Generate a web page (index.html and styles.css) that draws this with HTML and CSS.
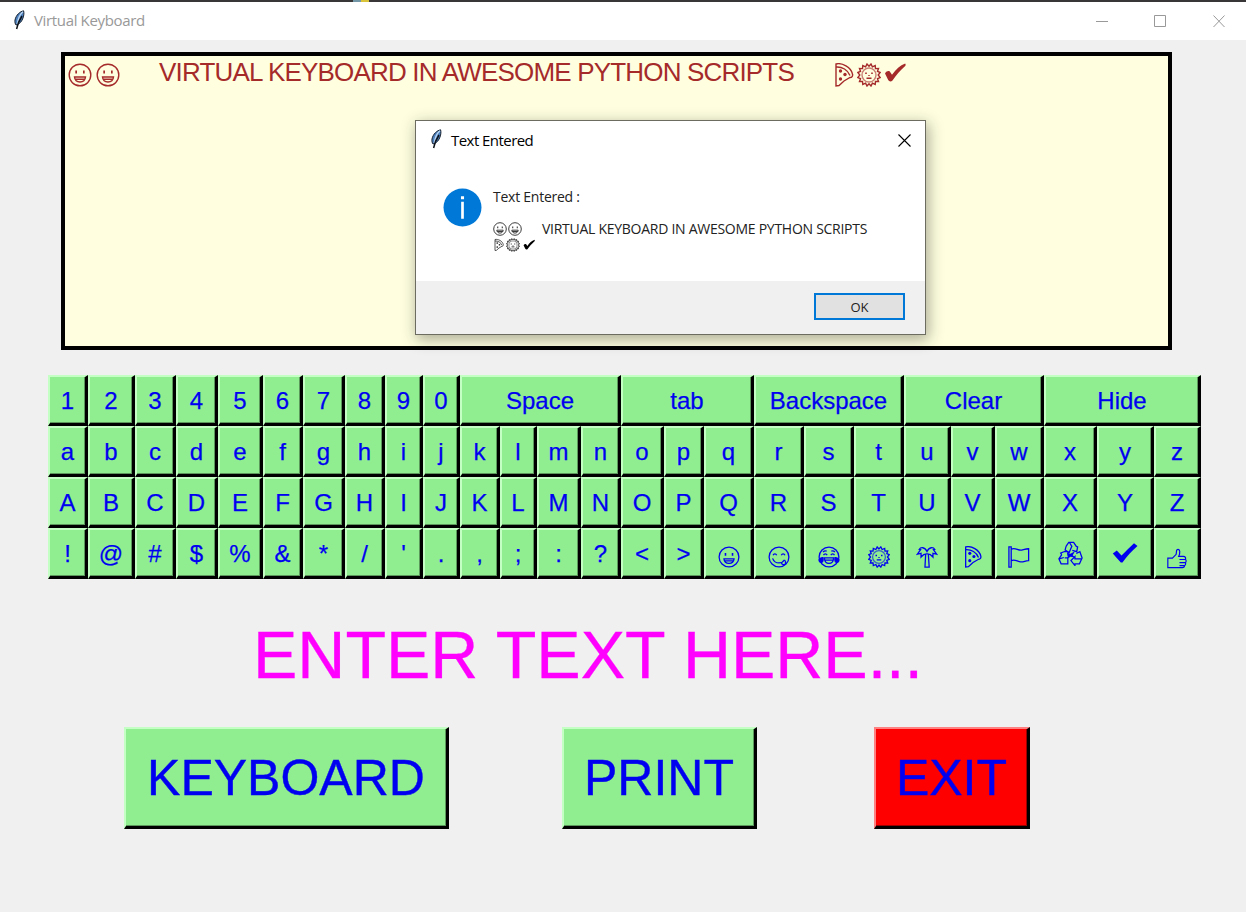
FILE: index.html
```html
<!DOCTYPE html>
<html lang="en">
<head>
<meta charset="utf-8">
<title>Virtual Keyboard</title>
<link rel="stylesheet" href="styles.css">
</head>
<body>
<svg class="sprite" aria-hidden="true">
  <symbol id="feather" viewBox="0 0 12 20">
    <path d="M10.600.8C7 1.500 3 5 2 10c-.4 2 .2 4 1 5l1.500-.5C7 13.500 9 11 10 8c.9-2.600 1.200-5 .6-7.200z" fill="#4b7fbd" stroke="#17212e" stroke-width="1"/>
    <path d="M9.800 1.800C6.500 5 5 9 4.200 14" fill="none" stroke="#b8d4f0" stroke-width="1.300"/>
    <path d="M9 6C7 9 5 12 3.600 19" fill="none" stroke="#0c1118" stroke-width="1.500"/>
  </symbol>
  <symbol id="grin" viewBox="0 0 24 24">
    <circle cx="12" cy="12" r="10.800"/><path d="M6.500 14h11c-.3 3-2.500 5-5.500 5s-5.200-2-5.500-5zM7.300 16.300h9.400"/>
    <path class="solid" d="M7.300 7.500h1.700v3H7.300zM15 7.500h1.700v3H15z"/>
  </symbol>
  <symbol id="yum" viewBox="0 0 24 24">
    <circle cx="12" cy="12" r="10.800"/><path d="M5.500 10c.8-1.800 3.200-1.800 4 0M14.500 10c.8-1.800 3.200-1.800 4 0M5 13.500c1.500 4 4 5 7 5 2.500 0 4.500-1 6-3.500M14.500 18.200c.5 2.500 3.500 3 4.500.8.500-1.200 0-2.500-.8-3.500"/>
  </symbol>
  <symbol id="joy" viewBox="0 0 24 24">
    <circle cx="12" cy="12" r="10.800"/><path d="M5.500 6.500C7 5 8 5 9.500 5.500M14.500 5.500C16 5 17 5 18.500 6.500M6 10c1-1.800 3-1.800 4 0M14 10c1-1.800 3-1.800 4 0M7 13h10c-.2 3.500-2 6-5 6s-4.800-2.500-5-6zM7.500 15.500h9"/>
    <path class="solid" d="M.5 14.500C1.500 12.500 4 12 6 12c.8 3 .3 6-1.800 6.500C2 19 0 17 .5 14.500zM23.500 14.500C22.500 12.500 20 12 18 12c-.8 3-.3 6 1.800 6.500 2.200.5 4.200-1.500 3.700-4z"/>
  </symbol>
  <symbol id="sun" viewBox="0 0 24 24">
    <path d="M12 3.200 14 1l1.400 2.800L18.200 2.600l.3 3 3-.1-1 2.800 2.700 1.200-2 2.500 2 2.500-2.700 1.200 1 2.800-3-.1-.3 3-2.800-1.200L14 23l-2-2.200L10 23l-1.400-2.800-2.800 1.200-.3-3-3 .1 1-2.800-2.700-1.200 2-2.500-2-2.500 2.700-1.200-1-2.800 3 .1.300-3 2.800 1.200L10 1z"/>
    <circle cx="12" cy="12" r="7" stroke-opacity=".6"/><path d="M9.500 15.200h5M12 12v1"/>
    <path class="solid" d="M8.200 9.500h1.600v1.600H8.200zM14.200 9.500h1.600v1.600h-1.600z"/>
  </symbol>
  <symbol id="palm" viewBox="0 0 24 24">
    <path d="M10.500 9.500 9.800 23h4.600l-.9-13.500M12 6C9.500.8 5 1 3.500 3.800L5 4 1.500 9c1.500-.4 2.500-.8 4-1L5.500 12c2-2.500 4-3.700 6.500-3.500 2.500-.2 4.500 1 6.500 3.500l0-4c1.500.2 2.500.6 4 1L19 4l1.500-.2C19 1 14.500.8 12 6z"/>
  </symbol>
  <symbol id="pizza" viewBox="0 0 24 24">
    <path d="M4 1C10-.5 19 4 20.500 11c.5 2-.7 3.600-2.500 3.500L12 18 7 22.500 4 23zM4 4C10 3.500 16 7 18 12.500"/>
    <circle class="solid" cx="8.500" cy="8" r="1.700"/><circle class="solid" cx="13" cy="11.500" r="1.700"/><circle class="solid" cx="8.500" cy="16" r="1.700"/>
  </symbol>
  <symbol id="flag" viewBox="0 0 24 24">
    <path d="M1 1h2.500v22H1zM3.500 3.500C8 1 11 5.500 15 4.500c3-.8 4.500-1.500 7.500-1.500v13c-3.500-.2-5 1.500-8.500 1.300-4-.3-6.500-3.300-10.500-1.300"/>
  </symbol>
  <symbol id="recycle" viewBox="0 0 28 28">
    <path d="M9 6 12 1.500h5.500L20.500 6l1.500.5-1 5.500-5-1.500M9 6l-1 4 4.500 3L15.500 6 13 2M6.500 12 3 13.500l1 2L1 20l2.500 5.500H11v-6.500H7.500M6.500 12l4.500 0 .5 5M1.500 20l5-1.500M20.500 14l4-2L27 19l-3 6.500h-5v2L14.500 22l4.500-4.500V20h7.500"/>
    <path class="solid" d="m10 13.500 4 .8 5-2.800-2.500 4.500 3 2.500-5.500-1-3.500 2.500.5-3.500z"/>
  </symbol>
  <symbol id="check" viewBox="0 0 26 20">
    <path class="solid" d="M.8 10.500 4.800 7.500l4.700 5C13.500 8.500 18 4 22 .2L25.500 3C19.500 8 14.500 14 10.500 19.500H8.800C6 16.500 3.500 13.500.8 10.500z"/>
  </symbol>
  <symbol id="inkcheck" viewBox="0 0 22 20">
    <path class="solid" d="M1 10.500C2.500 8 4.500 7.500 5.800 8.500l2.200 3.300C12 6.500 16 2.500 21.200.6c.6.800.6 1.800 0 2.400C16 7.500 12 12.500 8.500 17.500 7 19 5 18.500 4.200 17z"/>
  </symbol>
  <symbol id="thumb" viewBox="0 0 24 24">
    <path d="M1 11.500h5.500L11 7l.5-4.500c.2-2 3.500-2 3.800.8.200 2.200-.3 4.200-1.300 6.200h5.500c2.500 0 3.500 2 2.500 3.500 1.300 1 1.300 3 0 4 .8 1.300.2 3-1 3.500 0 1.500-1 2.500-2.500 2.500H1zM15 13.200h7M15 17h7M15 20.500h6"/>
  </symbol>
</svg>

<div class="strip"><i></i><b></b></div>

<header class="titlebar">
  <svg class="feather"><use href="#feather"/></svg>
  <span class="titlebar-text">Virtual Keyboard</span>
  <svg class="window-buttons" viewBox="0 0 130 13">
    <path d="M0 6.500h12M58.500.5h11v11h-11zM117.500.5l11 11.500M128.500.5l-11 11.500"/>
  </svg>
</header>

<main>
  <section class="entry">
    <svg class="ink"><use href="#grin"/></svg>
    <svg class="ink second"><use href="#grin"/></svg>
    <span class="entry-text">VIRTUAL KEYBOARD IN AWESOME PYTHON SCRIPTS</span>
    <svg class="ink"><use href="#pizza"/></svg>
    <svg class="ink"><use href="#sun"/></svg>
    <svg class="ink tick"><use href="#inkcheck"/></svg>
  </section>

  <section class="keys">
    <button>1</button><button>2</button><button>3</button><button>4</button><button>5</button><button>6</button><button>7</button><button>8</button><button>9</button><button>0</button>
    <button class="span4">Space</button><button class="span3">tab</button><button class="span3">Backspace</button><button class="span3">Clear</button><button class="span3">Hide</button>

    <button>a</button><button>b</button><button>c</button><button>d</button><button>e</button><button>f</button><button>g</button><button>h</button><button>i</button><button>j</button><button>k</button><button>l</button><button>m</button><button>n</button><button>o</button><button>p</button><button>q</button><button>r</button><button>s</button><button>t</button><button>u</button><button>v</button><button>w</button><button>x</button><button>y</button><button>z</button>

    <button>A</button><button>B</button><button>C</button><button>D</button><button>E</button><button>F</button><button>G</button><button>H</button><button>I</button><button>J</button><button>K</button><button>L</button><button>M</button><button>N</button><button>O</button><button>P</button><button>Q</button><button>R</button><button>S</button><button>T</button><button>U</button><button>V</button><button>W</button><button>X</button><button>Y</button><button>Z</button>

    <button>!</button><button>@</button><button>#</button><button>$</button><button>%</button><button>&amp;</button><button>*</button><button>/</button><button>'</button><button>.</button><button>,</button><button>;</button><button>:</button><button>?</button><button>&lt;</button><button>&gt;</button>
    <button><svg class="glyph"><use href="#grin"/></svg></button>
    <button><svg class="glyph"><use href="#yum"/></svg></button>
    <button><svg class="glyph"><use href="#joy"/></svg></button>
    <button><svg class="glyph"><use href="#sun"/></svg></button>
    <button><svg class="glyph"><use href="#palm"/></svg></button>
    <button><svg class="glyph"><use href="#pizza"/></svg></button>
    <button><svg class="glyph"><use href="#flag"/></svg></button>
    <button><svg class="glyph big"><use href="#recycle"/></svg></button>
    <button><svg class="glyph mark"><use href="#check"/></svg></button>
    <button><svg class="glyph low"><use href="#thumb"/></svg></button>
  </section>

  <h1 class="prompt">ENTER TEXT HERE...</h1>

  <section class="actions">
    <button class="keyboard">KEYBOARD</button>
    <button class="print">PRINT</button>
    <button class="exit">EXIT</button>
  </section>
</main>

<div class="dialog">
  <div class="dialog-title">
    <svg class="feather"><use href="#feather"/></svg>
    <span class="dialog-name">Text Entered</span>
    <svg class="close" viewBox="0 0 13 13"><path d="M.5.5l12 12M12.500.5l-12 12"/></svg>
  </div>
  <div class="dialog-body">
    <svg class="info" viewBox="0 0 38 38"><circle cx="19" cy="19" r="18.500"/><path d="M17.700 13.500h2.600V30h-2.600zM17.500 8h3v3h-3z"/></svg>
    <div class="message">
      <p class="lead">Text Entered :</p>
      <p class="line"><svg><use href="#grin"/></svg><svg><use href="#grin"/></svg><span>VIRTUAL KEYBOARD IN AWESOME PYTHON SCRIPTS</span></p>
      <p class="line"><svg class="slice"><use href="#pizza"/></svg><svg><use href="#sun"/></svg><svg class="tick"><use href="#inkcheck"/></svg></p>
    </div>
  </div>
  <div class="dialog-footer"><button>OK</button></div>
</div>
</body>
</html>
```

FILE: styles.css
```css
* { box-sizing: border-box; }

body {
  margin: 0;
  width: 1246px;
  height: 912px;
  overflow: hidden;
  background: #f0f0f0;
  font-family: "Liberation Sans", Arial, sans-serif;
}

.sprite { position: absolute; width: 0; height: 0; }

svg { display: block; flex: none; fill: none; stroke: currentColor; stroke-width: 1.4; }
.solid { fill: currentColor; stroke: none; }

.strip { display: flex; height: 2px; padding-left: 353px; background: #383637; }
.strip i { width: 8px; background: #7396a6; }
.strip b { width: 8px; background: #d9c33a; }

.titlebar {
  display: flex;
  align-items: center;
  height: 38px;
  padding: 0 20px 0 13px;
  background: #fff;
  color: #999;
  font: 15px "Open Sans", "Noto Sans", sans-serif;
}
.titlebar .feather { margin-top: -2px; }
.feather { width: 12px; height: 20px; stroke: none; }
.titlebar-text { margin: -2px 0 0 9px; letter-spacing: -.35px; white-space: nowrap; }
.window-buttons { width: 130px; height: 13px; margin-left: auto; stroke: #999; stroke-width: 1; }

main { padding-top: 12px; }

.entry {
  display: flex;
  align-items: flex-start;
  width: 1111px;
  height: 298px;
  margin-left: 61px;
  padding: 1px 3px;
  border: 4px solid #000;
  background: #ffffe0;
  color: #a52a2a;
}
.ink { width: 24px; height: 24px; margin: 6px 0 0 0; }
.ink + .ink { margin-left: 1px; }
.ink.second { margin-left: 4px; }
.ink.tick { width: 22px; height: 20px; margin: 6px 0 0 3px; }
.entry-text { width: 673px; margin-left: 39px; font-size: 26px; line-height: 31px; letter-spacing: -.82px; white-space: nowrap; }

button {
  display: flex;
  align-items: center;
  justify-content: center;
  min-width: 0;
  margin: 0;
  padding: 0;
  border: solid;
  border-width: 2px 3px 3px 2px;
  border-color: #c4ffc4 #000 #000 #c4ffc4;
  border-radius: 0;
  background: #90ee90;
  box-shadow: inset -1px -1px #5c985c;
  color: #0000f0;
  font: 24px "Liberation Sans", Arial, sans-serif;
}

.keys {
  display: grid;
  grid-template-columns: 40px 47px 41px 42px 45px 40px 42px 40px 38px 37px 40px 37px 44px 40px 43px 40px 50px 50px 50px 50px 47px 44px 49px 53px 57px 47px;
  grid-auto-rows: 51px;
  width: 1153px;
  margin: 25px 0 0 48px;
}
.keys button { padding-top: 2px; -webkit-text-stroke: .25px; }
.span3 { grid-column: span 3; }
.span4 { grid-column: span 4; }
.glyph { width: 22px; height: 22px; margin-top: 5px; }
.glyph.big { width: 25px; height: 25px; margin-top: -2px; }
.glyph.mark { width: 26px; height: 20px; margin-top: -2px; }
.glyph.low { width: 20px; height: 21px; margin-top: 8px; }

.prompt {
  margin: 38px 0 0 253px;
  color: #f0f;
  font-size: 66.500px;
  font-weight: 400;
  line-height: 76px;
  white-space: nowrap;
  -webkit-text-stroke: .3px;
}

.actions { display: flex; margin: 34px 0 0 124px; }
.actions button { height: 102px; font-size: 50px; -webkit-text-stroke: .4px; }
.actions .keyboard { width: 325px; }
.actions .print { width: 195px; margin-left: 113px; }
.actions .exit {
  width: 156px;
  margin-left: 117px;
  border-color: #ff8080 #000 #000 #ff8080;
  background: #f00;
  box-shadow: inset -1px -1px #900;
}

.dialog {
  position: absolute;
  left: 415px;
  top: 120px;
  width: 511px;
  height: 215px;
  display: flex;
  flex-direction: column;
  border: 1px solid #6c6c60;
  background: #fff;
  box-shadow: 2px 4px 14px 1px rgba(0, 0, 0, .32);
  color: #000;
  font-family: "Open Sans", "Noto Sans", sans-serif;
}
.dialog-title { display: flex; align-items: center; height: 37px; padding: 0 14px 0 14px; font-size: 15px; }
.dialog-title .feather { margin-top: -2px; }
.dialog-name { margin-left: 9px; letter-spacing: -.55px; white-space: nowrap; }
.close { width: 13px; height: 13px; margin: 1px 0 0 auto; stroke-width: 1.1; }
.dialog-body { display: flex; flex: 1; padding: 30px 0 0 27px; color: #222; }
.info { width: 39px; height: 39px; stroke: none; }
.info circle { fill: #0078d7; }
.info path { fill: #fff; }
.message { margin: 1px 0 0 11px; font-size: 14px; }
.message p { display: flex; margin: 0; line-height: 16px; white-space: nowrap; }
.message .lead { margin-bottom: 16px; letter-spacing: -.25px; }
.line { gap: 1px; }
.line svg { width: 14px; height: 14px; margin-top: 1px; stroke-width: 1.5; }
.line .slice { width: 12px; }
.line .tick { width: 12px; height: 12px; margin: 2px 0 0 2px; color: #000; }
.line span { margin-left: 19px; letter-spacing: -.27px; }
.dialog-footer { display: flex; justify-content: flex-end; height: 53px; padding: 12px 20px 0 0; background: #f0f0f0; }
.dialog-footer button {
  width: 91px;
  height: 27px;
  border: 2px solid #0078d7;
  background: #e1e1e1;
  box-shadow: none;
  color: #222;
  font: 13px "Open Sans", "Noto Sans", sans-serif;
}
```
